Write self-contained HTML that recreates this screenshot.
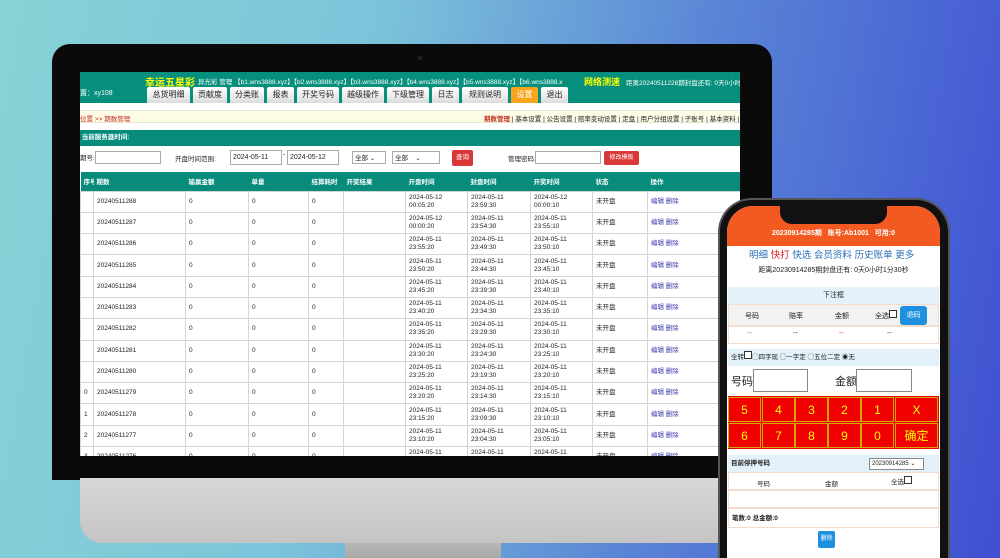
<!DOCTYPE html>
<html style="width:1000px;height:558px;overflow:hidden"><head><meta charset="utf-8"><style>
*{margin:0;padding:0;box-sizing:border-box}
body{width:1000px;height:558px;overflow:hidden;position:relative;font-family:"Liberation Sans","Noto Sans CJK SC",sans-serif;background:linear-gradient(100deg,#86d3d6 0%,#7cc3da 35%,#5a86d6 65%,#3f4fd2 100%)}
.abs{position:absolute}
.bezel{left:52px;top:44px;width:720px;height:436px;background:#0a0a0a;border-radius:18px 18px 0 0}
.chin{left:80px;top:478px;width:700px;height:65px;background:linear-gradient(#d8d8d8,#c4c4c4);border-radius:0 0 0 22px}
.stand{left:345px;top:543px;width:156px;height:15px;background:linear-gradient(#b8b8b8,#a8a8a8)}
.screen{left:80px;top:72px;width:660px;height:384px;background:#fff;overflow:hidden;font-size:7px;color:#222}
.top{position:absolute;left:0;top:0;width:660px;height:31px;background:#058f7c}
.tab{position:absolute;top:15px;height:16px;background:linear-gradient(#fff,#dcdcdc);color:#222;font-size:8px;text-align:center;line-height:16px;border-radius:2px 2px 0 0}
table{border-collapse:collapse;position:absolute;left:0;top:100px;width:700px;table-layout:fixed}
td{border:1px solid #cfd8d6;height:21.3px;padding-left:3px;font-size:6.5px;line-height:8px;vertical-align:middle;white-space:nowrap;overflow:hidden}
th{background:#078c7c;color:#fff;font-size:6.5px;text-align:left;height:19px;padding-left:3px;font-weight:bold;white-space:nowrap;overflow:hidden}
.lk{color:#3a3ab0}
.phone{left:718px;top:198px;width:232px;height:360px;background:#111;border-radius:34px 34px 0 0;border:2px solid #555;border-bottom:none}
.pscreen{left:727px;top:206px;width:213px;height:352px;background:#fff;border-radius:26px 26px 0 0;overflow:hidden;font-size:7px;color:#222}
.key{position:absolute;width:33px;height:25px;background:#f00000;border:1px solid #d6a600;color:#ff0;font-size:12px;text-align:center;line-height:24px}
</style></head><body>
<div class="abs bezel"></div>
<div class="abs" style="left:418px;top:56px;width:4px;height:4px;border-radius:2px;background:#222"></div>
<div class="abs chin"></div>
<div class="abs stand"></div>
<div class="abs" style="left:0;top:540px;width:1000px;height:18px;overflow:hidden"><div class="abs" style="left:215px;top:10px;font-size:56px;line-height:60px;font-weight:bold;color:#fff;letter-spacing:14px;white-space:nowrap">2021 1/8 26 /8</div></div>

<div class="abs screen">
 <div class="top">
  <div class="abs" style="left:0;top:16px;color:#fff;font-size:7px">置：xy108</div>
  <div class="abs" style="left:65px;top:2px;color:#ff0;font-size:10px;font-weight:bold">幸运五星彩</div>
  <div class="abs" style="left:118px;top:4px;color:#fff;font-size:6.5px;white-space:nowrap">异光彩 管理 【b1.wns3888.xyz】【b2.wns3888.xyz】【b3.wns3888.xyz】【b4.wns3888.xyz】【b5.wns3888.xyz】【b6.wns3888.x</div>
  <div class="abs" style="left:504px;top:3px;color:#ff0;font-size:9px;font-weight:bold">网络测速</div>
  <div class="abs" style="left:546px;top:5px;color:#fff;font-size:6.5px;white-space:nowrap">距离20240511228期封盘还有: 0天0小时3分44</div>
  <div class="tab" style="left:67px;width:43px">总货明细</div>
  <div class="tab" style="left:113px;width:34px">贡献度</div>
  <div class="tab" style="left:150px;width:34px">分类账</div>
  <div class="tab" style="left:187px;width:27px">报表</div>
  <div class="tab" style="left:217px;width:42px">开奖号码</div>
  <div class="tab" style="left:262px;width:42px">越级操作</div>
  <div class="tab" style="left:307px;width:42px">下级管理</div>
  <div class="tab" style="left:352px;width:27px">日志</div>
  <div class="tab" style="left:382px;width:46px">规则说明</div>
  <div class="tab" style="left:431px;width:27px;background:#f8a51c;color:#fff">设置</div>
  <div class="tab" style="left:461px;width:27px">退出</div>
 </div>
 <div class="abs" style="left:0;top:38px;width:660px;height:13px;background:#fdfbe6;border-top:1px solid #e5e5d0;border-bottom:1px solid #e5e5d0"></div>
 <div class="abs" style="left:0;top:41px;color:#c03020;font-size:6.5px">位置 &gt;&gt; 期数管理</div>
 <div class="abs" style="left:404px;top:41px;font-size:6.5px;white-space:nowrap"><b style="color:#c03020">期数管理</b> | 基本设置 | 公告设置 | 赔率变动设置 | 定盘 | 用户分组设置 | 子账号 | 基本资料 | 修改密码</div>
 <div class="abs" style="left:0;top:58px;width:660px;height:16px;background:#078c7c;color:#fff;font-size:6.5px;line-height:16px;font-weight:bold">&nbsp;当前服务器时间:</div>
 <div class="abs" style="left:0;top:80px;font-size:6.5px">期号:</div>
 <div class="abs" style="left:15px;top:79px;width:66px;height:13px;border:1px solid #aaa"></div>
 <div class="abs" style="left:95px;top:81px;font-size:6.5px">开盘时间范围:</div>
 <div class="abs" style="left:150px;top:78px;width:52px;height:15px;border:1px solid #aaa;font-size:7px;line-height:13px;padding-left:2px">2024-05-11</div>
 <div class="abs" style="left:203px;top:80px;font-size:7px">-</div>
 <div class="abs" style="left:207px;top:78px;width:52px;height:15px;border:1px solid #aaa;font-size:7px;line-height:13px;padding-left:2px">2024-05-12</div>
 <div class="abs" style="left:272px;top:79px;width:34px;height:13px;border:1px solid #aaa;font-size:6.5px;padding-left:2px">全部 ⌄</div>
 <div class="abs" style="left:312px;top:79px;width:48px;height:13px;border:1px solid #aaa;font-size:6.5px;padding-left:2px">全部 &nbsp;&nbsp;&nbsp;⌄</div>
 <div class="abs" style="left:372px;top:78px;width:21px;height:16px;background:#d83838;color:#fff;font-size:6.5px;text-align:center;line-height:16px;border-radius:2px">查询</div>
 <div class="abs" style="left:428px;top:81px;font-size:6.5px">管理密码:</div>
 <div class="abs" style="left:455px;top:79px;width:66px;height:13px;border:1px solid #aaa"></div>
 <div class="abs" style="left:524px;top:79px;width:35px;height:14px;background:#d83838;color:#fff;font-size:6px;text-align:center;line-height:14px;border-radius:2px">修改模板</div>
 <table>
  <colgroup><col style="width:13px"><col style="width:92px"><col style="width:63px"><col style="width:60px"><col style="width:35px"><col style="width:62px"><col style="width:62px"><col style="width:63px"><col style="width:62px"><col style="width:55px"><col></colgroup>
  <tr><th>序号</th><th>期数</th><th>输赢金额</th><th>单量</th><th>结算耗时</th><th>开奖结果</th><th>开盘时间</th><th>封盘时间</th><th>开奖时间</th><th>状态</th><th>操作</th></tr>
  <tr><td></td><td>20240511288</td><td>0</td><td>0</td><td>0</td><td></td><td>2024-05-12<br>00:05:20</td><td>2024-05-11<br>23:59:30</td><td>2024-05-12<br>00:00:10</td><td>未开盘</td><td class="lk">编辑 删除</td></tr>
  <tr><td></td><td>20240511287</td><td>0</td><td>0</td><td>0</td><td></td><td>2024-05-12<br>00:00:20</td><td>2024-05-11<br>23:54:30</td><td>2024-05-11<br>23:55:10</td><td>未开盘</td><td class="lk">编辑 删除</td></tr>
  <tr><td></td><td>20240511286</td><td>0</td><td>0</td><td>0</td><td></td><td>2024-05-11<br>23:55:20</td><td>2024-05-11<br>23:49:30</td><td>2024-05-11<br>23:50:10</td><td>未开盘</td><td class="lk">编辑 删除</td></tr>
  <tr><td></td><td>20240511285</td><td>0</td><td>0</td><td>0</td><td></td><td>2024-05-11<br>23:50:20</td><td>2024-05-11<br>23:44:30</td><td>2024-05-11<br>23:45:10</td><td>未开盘</td><td class="lk">编辑 删除</td></tr>
  <tr><td></td><td>20240511284</td><td>0</td><td>0</td><td>0</td><td></td><td>2024-05-11<br>23:45:20</td><td>2024-05-11<br>23:39:30</td><td>2024-05-11<br>23:40:10</td><td>未开盘</td><td class="lk">编辑 删除</td></tr>
  <tr><td></td><td>20240511283</td><td>0</td><td>0</td><td>0</td><td></td><td>2024-05-11<br>23:40:20</td><td>2024-05-11<br>23:34:30</td><td>2024-05-11<br>23:35:10</td><td>未开盘</td><td class="lk">编辑 删除</td></tr>
  <tr><td></td><td>20240511282</td><td>0</td><td>0</td><td>0</td><td></td><td>2024-05-11<br>23:35:20</td><td>2024-05-11<br>23:29:30</td><td>2024-05-11<br>23:30:10</td><td>未开盘</td><td class="lk">编辑 删除</td></tr>
  <tr><td></td><td>20240511281</td><td>0</td><td>0</td><td>0</td><td></td><td>2024-05-11<br>23:30:20</td><td>2024-05-11<br>23:24:30</td><td>2024-05-11<br>23:25:10</td><td>未开盘</td><td class="lk">编辑 删除</td></tr>
  <tr><td></td><td>20240511280</td><td>0</td><td>0</td><td>0</td><td></td><td>2024-05-11<br>23:25:20</td><td>2024-05-11<br>23:19:30</td><td>2024-05-11<br>23:20:10</td><td>未开盘</td><td class="lk">编辑 删除</td></tr>
  <tr><td>0</td><td>20240511279</td><td>0</td><td>0</td><td>0</td><td></td><td>2024-05-11<br>23:20:20</td><td>2024-05-11<br>23:14:30</td><td>2024-05-11<br>23:15:10</td><td>未开盘</td><td class="lk">编辑 删除</td></tr>
  <tr><td>1</td><td>20240511278</td><td>0</td><td>0</td><td>0</td><td></td><td>2024-05-11<br>23:15:20</td><td>2024-05-11<br>23:09:30</td><td>2024-05-11<br>23:10:10</td><td>未开盘</td><td class="lk">编辑 删除</td></tr>
  <tr><td>2</td><td>20240511277</td><td>0</td><td>0</td><td>0</td><td></td><td>2024-05-11<br>23:10:20</td><td>2024-05-11<br>23:04:30</td><td>2024-05-11<br>23:05:10</td><td>未开盘</td><td class="lk">编辑 删除</td></tr>
  <tr><td>3</td><td>20240511276</td><td>0</td><td>0</td><td>0</td><td></td><td>2024-05-11<br>23:05:20</td><td>2024-05-11<br>22:59:30</td><td>2024-05-11<br>23:00:10</td><td>未开盘</td><td class="lk">编辑 删除</td></tr>
 </table>
</div>

<div class="abs phone"></div>
<div class="abs pscreen">
 <div class="abs" style="left:0;top:0;width:213px;height:40px;background:#f35a21"></div>
 <div class="abs" style="left:53px;top:0;width:107px;height:18px;background:#111;border-radius:0 0 12px 12px"></div>
 <div class="abs" style="left:0;top:22px;width:213px;text-align:center;color:#fff;font-size:7px;font-weight:bold">20230914285期 &nbsp; 账号:Ab1001 &nbsp; 可用:0</div>
 <div class="abs" style="left:22px;top:41px;font-size:9.5px;color:#2a6fb5;white-space:nowrap">明细 <span style="color:#e02020">快打</span> 快选 会员资料 历史账单 更多</div>
 <div class="abs" style="left:0;top:59px;width:213px;text-align:center;font-size:7px">距离20230914285期封盘还有: 0天0小时1分30秒</div>
 <div class="abs" style="left:1px;top:81px;width:211px;height:17px;background:#e3f2fa;text-align:center;line-height:17px;font-size:7px">下注框</div>
 <div class="abs" style="left:1px;top:98px;width:211px;height:22px;background:#f2f2f2;border:1px solid #f3dccd"></div>
 <div class="abs" style="left:18px;top:105px;font-size:7px">号码</div>
 <div class="abs" style="left:62px;top:105px;font-size:7px">赔率</div>
 <div class="abs" style="left:108px;top:105px;font-size:7px">金额</div>
 <div class="abs" style="left:148px;top:104px;font-size:7px">全选<span style="display:inline-block;width:8px;height:8px;border:1px solid #333;background:#fff"></span></div>
 <div class="abs" style="left:173px;top:100px;width:27px;height:19px;background:#1e90e0;color:#fff;border-radius:3px;text-align:center;line-height:19px;font-size:7px">退码</div>
 <div class="abs" style="left:1px;top:120px;width:211px;height:18px;border:1px solid #f3dccd"></div>
 <div class="abs" style="left:20px;top:124px;color:#2a2;font-size:7px">--</div>
 <div class="abs" style="left:66px;top:124px;font-size:7px">--</div>
 <div class="abs" style="left:112px;top:124px;color:#d22;font-size:7px">--</div>
 <div class="abs" style="left:160px;top:124px;font-size:7px">--</div>
 <div class="abs" style="left:1px;top:143px;width:211px;height:17px;background:#e3f2fa;font-size:6.5px;line-height:17px;padding-left:3px;white-space:nowrap">全转<span style="display:inline-block;width:8px;height:8px;border:1px solid #333;background:#fff"></span>◯四字现 ◯一字定 ◯五位二定 ◉无</div>
 <div class="abs" style="left:4px;top:167px;font-size:11px">号码</div>
 <div class="abs" style="left:26px;top:163px;width:55px;height:23px;border:1px solid #888"></div>
 <div class="abs" style="left:108px;top:167px;font-size:11px">金额</div>
 <div class="abs" style="left:129px;top:163px;width:56px;height:23px;border:1px solid #888"></div>
 <div class="abs" style="left:1px;top:190px;width:211px;height:53px;background:#e80000"></div>
 <div class="key" style="left:1px;top:191px">5</div><div class="key" style="left:35px;top:191px">4</div><div class="key" style="left:68px;top:191px">3</div><div class="key" style="left:101px;top:191px">2</div><div class="key" style="left:134px;top:191px">1</div><div class="key" style="left:168px;top:191px;width:43px">X</div>
 <div class="key" style="left:1px;top:217px">6</div><div class="key" style="left:35px;top:217px">7</div><div class="key" style="left:68px;top:217px">8</div><div class="key" style="left:101px;top:217px">9</div><div class="key" style="left:134px;top:217px">0</div><div class="key" style="left:168px;top:217px;width:43px">确定</div>
 <div class="abs" style="left:1px;top:249px;width:211px;height:17px;background:#e3f2fa;font-size:6.5px;line-height:17px;padding-left:3px;font-weight:bold">目前停押号码</div>
 <div class="abs" style="left:142px;top:252px;width:55px;height:12px;border:1px solid #888;background:#fff;font-size:6px;line-height:10px;padding-left:2px">20230914285 ⌄</div>
 <div class="abs" style="left:1px;top:266px;width:211px;height:18px;border:1px solid #f3dccd"></div>
 <div class="abs" style="left:30px;top:272px;font-size:6.5px">号码</div>
 <div class="abs" style="left:98px;top:272px;font-size:6.5px">金额</div>
 <div class="abs" style="left:164px;top:270px;font-size:6.5px">全选<span style="display:inline-block;width:8px;height:8px;border:1px solid #333"></span></div>
 <div class="abs" style="left:1px;top:284px;width:211px;height:18px;border:1px solid #f3dccd"></div>
 <div class="abs" style="left:1px;top:302px;width:211px;height:20px;border:1px solid #f3dccd;font-size:6.5px;line-height:20px;padding-left:3px;font-weight:bold">笔数:0 总金额:0</div>
 <div class="abs" style="left:91px;top:325px;width:17px;height:17px;background:#1e90e0;color:#fff;border-radius:2px;font-size:6px;text-align:center;line-height:17px">删除</div>
</div>
</body></html>
